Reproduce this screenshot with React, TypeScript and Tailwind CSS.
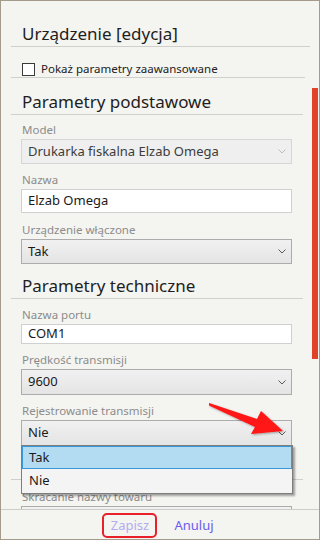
import React from "react";

const font = { fontFamily: '"Noto Sans", "Open Sans", sans-serif' };

function Chevron({ disabled }: { disabled?: boolean }) {
  return (
    <svg width="8" height="5" viewBox="0 0 8 5" className="shrink-0">
      <path d="M0.5 0.5 L4 4 L7.5 0.5" fill="none" stroke={disabled ? "#bdbdbd" : "#5a5a5a"} strokeWidth="1" />
    </svg>
  );
}

function Label({ children, mt = "mt-[8px]" }: { children: React.ReactNode; mt?: string }) {
  return (
    <div className={`${mt} ml-[11px] h-[16px] leading-[16px] text-[11.5px] text-[#8c8c8c] mb-[1px]`}>{children}</div>
  );
}

function Select({ value, disabled, h = "h-[25px]" }: { value: string; disabled?: boolean; h?: string }) {
  return (
    <div
      className={`ml-[10px] w-[271px] ${h} flex items-center justify-between pl-[6px] pr-[5px] border text-[13px] ${
        disabled
          ? "bg-[#efefef] border-[#d6d6d6] text-[#3c3c3c]"
          : "bg-gradient-to-b from-[#f1f1f1] to-[#e4e4e4] border-[#acacac] text-[#1a1a1a]"
      }`}
    >
      <span>{value}</span>
      <Chevron disabled={disabled} />
    </div>
  );
}

function Input({ value, h = "h-[24px]" }: { value: string; h?: string }) {
  return (
    <div className={`ml-[10px] w-[271px] ${h} flex items-center pl-[6px] bg-white border border-[#d0d0d0] text-[13px] text-[#1a1a1a]`}>
      {value}
    </div>
  );
}

function Heading({ children, mt }: { children?: React.ReactNode; mt: string }) {
  return (
    <div className={`${mt} h-[25px] leading-[24px] pl-[11px] border-b border-[#cfcfcb] text-[17px] text-[#1e1e1e]`}>
      {children}
    </div>
  );
}

export default function App() {
  return (
    <div style={font} className="w-[320px] h-[540px] border border-[#a59b8d] bg-[#f4f4f0] relative overflow-hidden flex flex-col">
      {/* header */}
      <div className="ml-[10px] mr-[9px] shrink-0">
        <div className="mt-[21px] h-[25px] leading-[24px] pl-[11px] border-b border-[#cfcfcb] text-[17px] text-[#1e1e1e]">
          Urządzenie [edycja]
        </div>
        <div className="h-[31px] pt-[14px] pl-[11px] pr-[5px] flex items-center border-b border-[#cfcfcb] mr-[5px]">
          <div className="w-[13px] h-[13px] bg-white border border-[#3a3a3a]" />
          <span className="ml-[6px] text-[11.5px] text-[#222]">Pokaż parametry zaawansowane</span>
        </div>
      </div>

      {/* scroll area */}
      <div className="flex-1 relative overflow-hidden">
        <div className="ml-[10px] mr-[16px]">
          <Heading mt="mt-[12px]">Parametry podstawowe</Heading>
          <Label mt="mt-[7px]">Model</Label>
          <Select value="Drukarka fiskalna Elzab Omega" disabled />
          <Label>Nazwa</Label>
          <Input value="Elzab Omega" />
          <Label mt="mt-[9px]">Urządzenie włączone</Label>
          <Select value="Tak" />
          <Heading mt="mt-[10px]">Parametry techniczne</Heading>
          <Label>Nazwa portu</Label>
          <Input value="COM1" h="h-[20px]" />
          <Label>Prędkość transmisji</Label>
          <Select value="9600" h="h-[26px]" />
          <Label>Rejestrowanie transmisji</Label>
          <Select value="Nie" h="h-[26px]" />
          <Heading mt="mt-[9px]" />
          <Label mt="mt-[9px]">Skracanie nazwy towaru</Label>
          <Select value="Nie" />
        </div>

        {/* scrollbar thumb */}
        <div className="absolute left-[311px] top-[10px] w-[6px] h-[271px] bg-[#e04327]" />

        {/* dropdown list */}
        <div className="absolute left-[20px] top-[367px] w-[272px] h-[49px] bg-[#f4f4f4] border border-[#7d7d7d] shadow-[2px_2px_2px_rgba(0,0,0,0.35)] text-[13px] text-[#1a1a1a]">
          <div className="h-[23px] flex items-center pl-[6px] bg-[#b3dcf3] border border-[#3b98d8]">Tak</div>
          <div className="h-[24px] flex items-center pl-[7px]">Nie</div>
        </div>

        {/* red annotation arrow */}
        <svg className="absolute left-0 top-0 pointer-events-none" width="320" height="440" viewBox="0 78 320 440">
          <defs>
            <filter id="sh" x="-10%" y="-10%" width="130%" height="130%">
              <feDropShadow dx="1" dy="1" stdDeviation="0.8" floodColor="#000" floodOpacity="0.35" />
            </filter>
          </defs>
          <polygon
            points="208,403 256,419 260,411 282,431 250,434 254,427 208,405.5"
            fill="#ff1414"
            filter="url(#sh)"
          />
        </svg>
      </div>

      {/* footer */}
      <div className="shrink-0 h-[30px] border-t border-[#cdcdc8] bg-[#f4f4f0] flex items-center justify-center gap-[17px] text-[13px]">
        <div className="w-[55px] h-[25px] rounded-[5px] border-2 border-[#e8202a] flex items-center justify-center text-[#b3acf2] mt-[2px] ml-[-4px]">
          Zapisz
        </div>
        <div className="text-[#6a5cf0] mt-[2px]">Anuluj</div>
      </div>
    </div>
  );
}
